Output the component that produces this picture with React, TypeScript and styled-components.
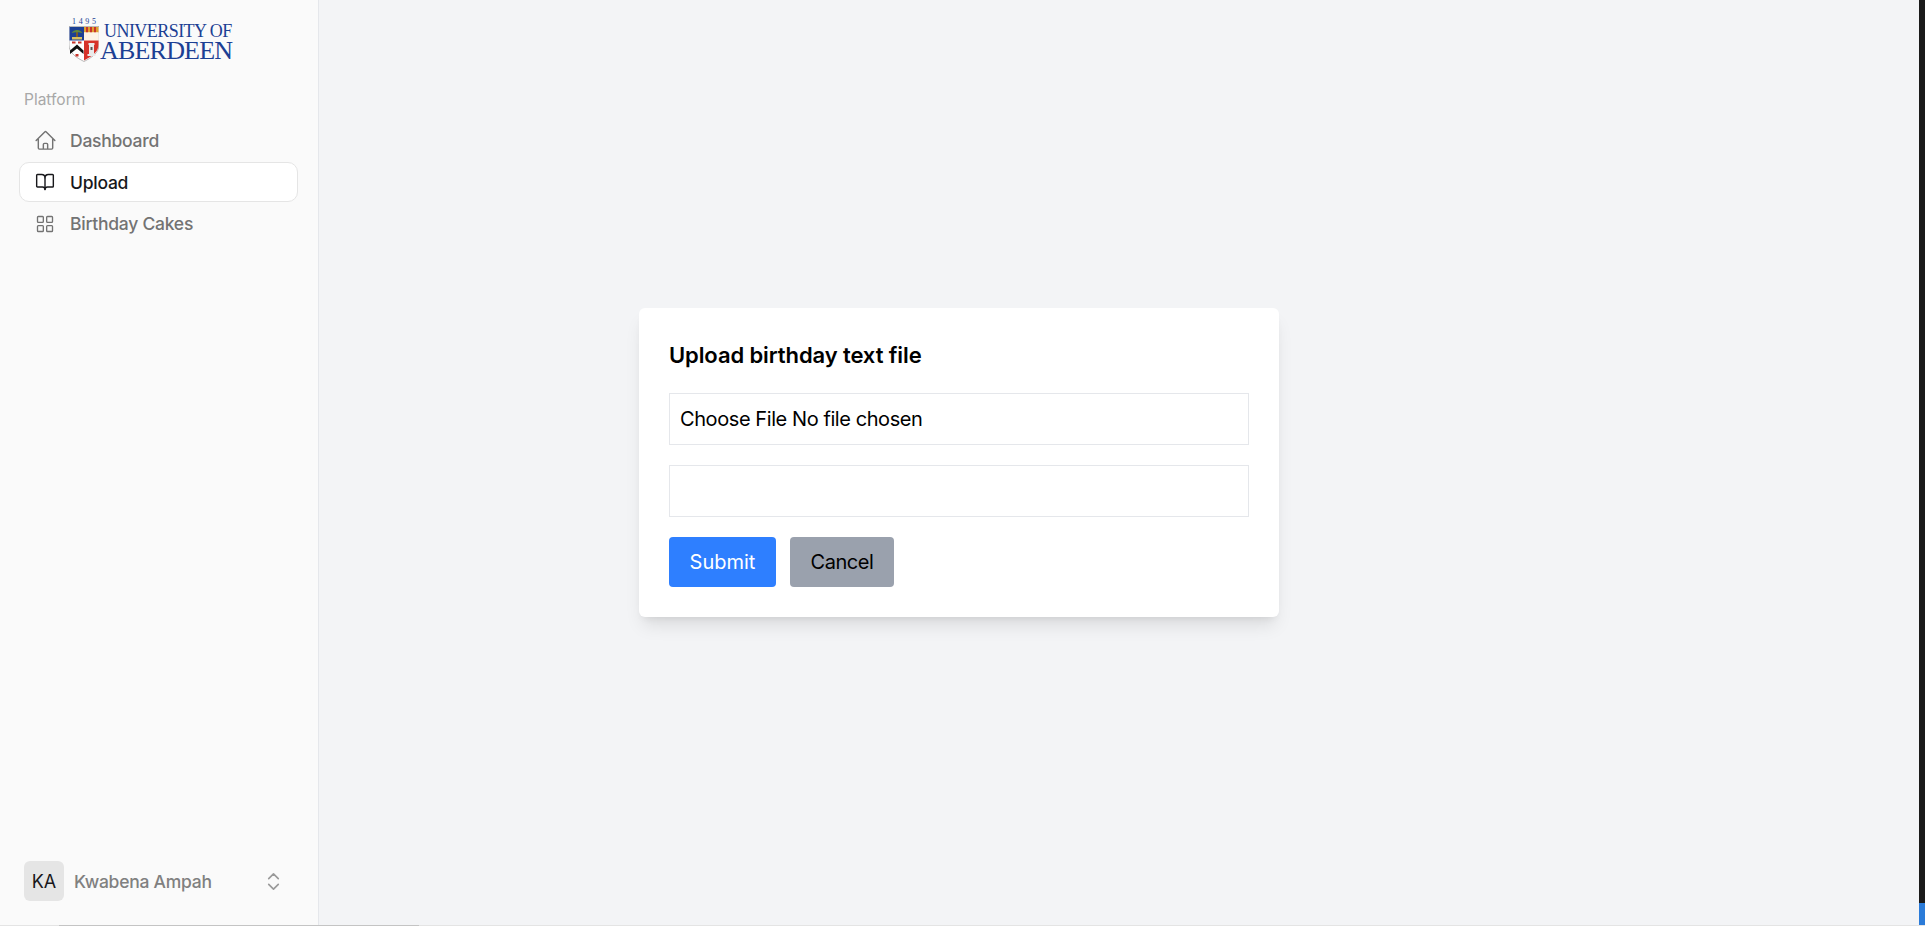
import React from "react";
import styled, { createGlobalStyle } from "styled-components";
import { BookOpen, LayoutGrid, ChevronsUpDown } from "lucide-react";
import { HiOutlineHome } from "react-icons/hi2";

const Global = createGlobalStyle`
  html, body { margin: 0; padding: 0; height: 100%; overflow: hidden; }
  #root { height: 100%; }
  * { box-sizing: border-box; }
  body { font-family: Inter, "Noto Sans", sans-serif; background: #f3f4f6; }
`;

const Page = styled.div`
  position: relative;
  display: flex;
  flex-direction: column;
  height: 926px;
  width: 1925px;
`;

const Body = styled.div`
  flex: 1;
  min-height: 0;
  display: flex;
`;

const Sidebar = styled.aside`
  width: 319px;
  flex: none;
  background: #fafafa;
  border-right: 1px solid #e5e7eb;
  display: flex;
  flex-direction: column;
  padding: 16px 20px 24px 19px;
`;

const LogoRow = styled.div`
  display: flex;
  align-items: flex-end;
  height: 46px;
  padding-left: 50px;
  gap: 1px;
`;

const LogoMark = styled.div`
  display: flex;
  flex-direction: column;
  align-items: center;
  width: 30px;
  flex: none;
`;

const Founded = styled.span`
  font-family: "Liberation Serif", serif;
  font-size: 8px;
  line-height: 9px;
  letter-spacing: 2.6px;
  margin-right: -2.6px;
  color: #1c3f94;
  white-space: nowrap;
`;

const LogoWords = styled.div`
  display: flex;
  flex-direction: column;
  font-family: "Liberation Serif", serif;
  color: #1c3f94;
  line-height: 1;
`;

const LogoTop = styled.span`
  font-size: 18px;
  line-height: 18px;
  letter-spacing: -0.55px;
  padding-left: 4px;
  white-space: nowrap;
`;

const LogoBottom = styled.span`
  font-size: 26px;
  line-height: 22px;
  letter-spacing: -0.8px;
  white-space: nowrap;
`;

const GroupLabel = styled.div`
  margin: 28px 0 0 5px;
  font-size: 15.5px;
  line-height: 20px;
  color: #a8a8a8;
`;

const Nav = styled.nav`
  margin-top: 10.5px;
  display: flex;
  flex-direction: column;
  gap: 1.5px;
`;

const NavItem = styled.a<{ $active?: boolean }>`
  display: flex;
  align-items: center;
  gap: 15px;
  height: 40px;
  padding: 0 15px;
  font-size: 17.5px;
  letter-spacing: -0.25px;
  font-weight: 450;
  border-radius: 10px;
  color: ${(p) => (p.$active ? "#18181b" : "#737373")};
  background: ${(p) => (p.$active ? "#ffffff" : "transparent")};
  border: 1px solid ${(p) => (p.$active ? "#e5e5e5" : "transparent")};
  svg { flex: none; }
`;

const HomeIcon = styled(HiOutlineHome)`
  margin: 0 -1.5px;
`;

const Spacer = styled.div`
  flex: 1;
`;

const UserRow = styled.div`
  display: flex;
  align-items: center;
  gap: 10px;
  padding-left: 5px;
  color: #808080;
`;

const Avatar = styled.div`
  width: 40px;
  height: 40px;
  border-radius: 6px;
  background: #e5e5e5;
  color: #18181b;
  display: flex;
  align-items: center;
  justify-content: center;
  font-size: 18px;
`;

const UserName = styled.span`
  flex: 1;
  font-size: 17.5px;
  letter-spacing: -0.25px;
  font-weight: 450;
`;

const Chevrons = styled.span`
  display: flex;
  margin-right: 13px;
  color: #9a9a9a;
`;

const Main = styled.main`
  flex: 1;
`;

const Modal = styled.div`
  position: absolute;
  left: 0;
  top: 0;
  width: 1918px;
  height: 925px;
  display: flex;
  align-items: center;
  justify-content: center;
`;

const Card = styled.form`
  width: 640px;
  background: #fff;
  border-radius: 6px;
  padding: 30px;
  box-shadow: 0 12px 18px -4px rgba(0, 0, 0, 0.1), 0 5px 8px -5px rgba(0, 0, 0, 0.1);
`;

const Title = styled.h2`
  margin: 0 0 20px;
  font-size: 22px;
  line-height: 35px;
  font-weight: 600;
  letter-spacing: -0.1px;
  color: #000;
`;

const Field = styled.div`
  height: 52px;
  border: 1px solid #e5e7eb;
  padding: 0 10px;
  margin-bottom: 20px;
  display: flex;
  align-items: center;
  font-size: 20px;
  letter-spacing: -0.42px;
  color: #000;
`;

const Buttons = styled.div`
  display: flex;
  gap: 14px;
`;

const Button = styled.button<{ $primary?: boolean }>`
  height: 50px;
  width: ${(p) => (p.$primary ? "107px" : "104px")};
  padding: 0;
  border: 0;
  border-radius: 4px;
  font: inherit;
  font-size: 20px;
  letter-spacing: ${(p) => (p.$primary ? "0" : "-0.42px")};
  color: ${(p) => (p.$primary ? "#fff" : "#000")};
  background: ${(p) => (p.$primary ? "#2e7fff" : "#9aa1ad")};
`;

const EdgeStrip = styled.div`
  position: absolute;
  right: 0;
  top: 0;
  bottom: 1px;
  width: 6px;
  display: flex;
  flex-direction: column;
`;

const EdgeDark = styled.div`
  flex: 1;
  background: #1a1a1a;
`;

const EdgeBlue = styled.div`
  height: 22px;
  background: #2b7bd8;
`;

const BottomBar = styled.div`
  height: 1px;
  flex: none;
  background: #e4e4e4;
  padding-left: 59px;
`;

const BottomThumb = styled.div`
  width: 360px;
  height: 1px;
  background: #c4c4c4;
`;

function Shield() {
  return (
    <svg width="30" height="36" viewBox="0 0 30 36">
      <path d="M0 .5h30V19c0 8-8 13-15 16.5C8 32 0 27 0 19z" fill="#fff" stroke="#777" strokeWidth=".5" />
      <path d="M.5 1H15v13.5H.5z" fill="#1c3f94" />
      <path d="M7 4h2v7H7z" fill="#7a5a2a" />
      <path d="M2.5 7c2.5-4 8.5-4 11 0-3-1-8-1-11 0z" fill="#5f8a3c" />
      <path d="M3 11h10v2.5H3z" fill="#d8c060" />
      <path d="M15 1h14.5v5.5H15z" fill="#e0a030" />
      <path d="M17 1h2v5.5h-2zM21 1h2v5.5h-2zM25 1h2v5.5h-2z" fill="#c8352b" />
      <path d="M15 6.5h14.5v8H15z" fill="#fdf3e6" />
      <path d="M15 14.5h14.5V19c0 7-7.5 12-14.5 15.5z" fill="#d6322a" />
      <path d="M19.5 17h6v2h-6zM20 19h5v9h-5zM18.5 28h8v2h-8z" fill="#eaeaea" />
      <path d="M21.5 21h2v3h-2z" fill="#555" />
      <path d="M3 15.5h3.5v2H3zM9 15.5h3.5v2H9z" fill="#c8352b" />
      <path d="M1 24.5 8 18.5 14.5 24.5V28L8 22.5 1 28z" fill="#111" />
      <path d="M6.5 28h3v2.5h-3z" fill="#c8352b" />
    </svg>
  );
}

export default function App() {
  return (
    <Page>
      <Global />
      <Body>
        <Sidebar>
          <LogoRow>
            <LogoMark>
              <Founded>1495</Founded>
              <Shield />
            </LogoMark>
            <LogoWords>
              <LogoTop>UNIVERSITY OF</LogoTop>
              <LogoBottom>ABERDEEN</LogoBottom>
            </LogoWords>
          </LogoRow>
          <GroupLabel>Platform</GroupLabel>
          <Nav>
            <NavItem><HomeIcon size={23} />Dashboard</NavItem>
            <NavItem $active><BookOpen size={20} strokeWidth={1.7} />Upload</NavItem>
            <NavItem><LayoutGrid size={20} strokeWidth={1.6} />Birthday Cakes</NavItem>
          </Nav>
          <Spacer />
          <UserRow>
            <Avatar>KA</Avatar>
            <UserName>Kwabena Ampah</UserName>
            <Chevrons><ChevronsUpDown size={23} strokeWidth={1.7} /></Chevrons>
          </UserRow>
        </Sidebar>
        <Main />
      </Body>
      <BottomBar><BottomThumb /></BottomBar>
      <Modal>
        <Card>
          <Title>Upload birthday text file</Title>
          <Field>Choose File No file chosen</Field>
          <Field />
          <Buttons>
            <Button type="button" $primary>Submit</Button>
            <Button type="button">Cancel</Button>
          </Buttons>
        </Card>
      </Modal>
      <EdgeStrip>
        <EdgeDark />
        <EdgeBlue />
      </EdgeStrip>
    </Page>
  );
}
